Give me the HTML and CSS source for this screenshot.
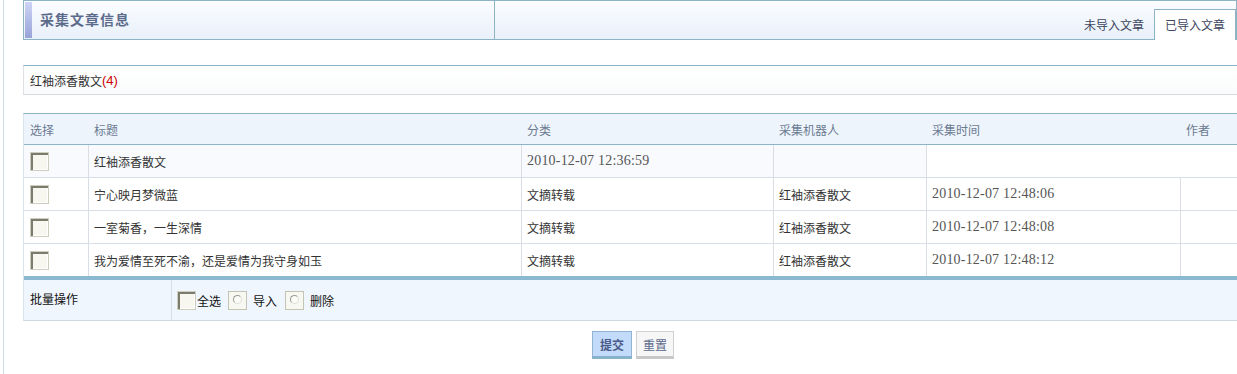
FILE: index.html
```html
<!DOCTYPE html>
<html lang="zh">
<head>
<meta charset="utf-8">
<title>采集文章信息</title>
<link rel="stylesheet" href="styles.css">
</head>
<body>
<div class="page">
  <div class="main">
    <div class="header">
      <div class="title"><span class="accent"></span><span class="title-text">采集文章信息</span></div>
      <div class="tabs">
        <span class="tab">未导入文章</span>
        <span class="tab active">已导入文章</span>
      </div>
    </div>

    <div class="info">红袖添香散文<span class="count">(4)</span></div>

    <div class="grid">
      <div class="row head">
        <div class="c">选择</div>
        <div class="c">标题</div>
        <div class="c">分类</div>
        <div class="c">采集机器人</div>
        <div class="c">采集时间</div>
        <div class="c">作者</div>
      </div>
      <div class="row body first">
        <div class="c"><span class="cb"></span></div>
        <div class="c d">红袖添香散文</div>
        <div class="c d"><span class="date">2010-12-07 12:36:59</span></div>
        <div class="c d"></div>
        <div class="c d span2"></div>
      </div>
      <div class="row body">
        <div class="c"><span class="cb"></span></div>
        <div class="c d">宁心映月梦微蓝</div>
        <div class="c d">文摘转载</div>
        <div class="c d">红袖添香散文</div>
        <div class="c d"><span class="date">2010-12-07 12:48:06</span></div>
        <div class="c d"></div>
      </div>
      <div class="row body">
        <div class="c"><span class="cb"></span></div>
        <div class="c d">一室菊香，一生深情</div>
        <div class="c d">文摘转载</div>
        <div class="c d">红袖添香散文</div>
        <div class="c d"><span class="date">2010-12-07 12:48:08</span></div>
        <div class="c d"></div>
      </div>
      <div class="row body last">
        <div class="c"><span class="cb"></span></div>
        <div class="c d">我为爱情至死不渝，还是爱情为我守身如玉</div>
        <div class="c d">文摘转载</div>
        <div class="c d">红袖添香散文</div>
        <div class="c d"><span class="date">2010-12-07 12:48:12</span></div>
        <div class="c d"></div>
      </div>
    </div>

    <div class="batch">
      <div class="batch-label">批量操作</div>
      <div class="batch-ops">
        <span class="cb"></span><span class="op-text tight">全选</span>
        <span class="rb"><span class="dot"></span></span><span class="op-text">导入</span>
        <span class="rb"><span class="dot"></span></span><span class="op-text">删除</span>
      </div>
    </div>

    <div class="buttons">
      <span class="btn primary">提交</span>
      <span class="btn">重置</span>
    </div>
  </div>
</div>
</body>
</html>
```

FILE: styles.css
```css
html, body {
  margin: 0;
  padding: 0;
  overflow: hidden;
  background: #fff;
}
body {
  font-family: "Noto Sans CJK SC", "Liberation Sans", sans-serif;
  font-size: 12px;
  color: #333;
}
.page {
  margin-left: 3px;
  border-left: 1px solid #c9dcec;
  padding-left: 19px;
  min-height: 374px;
}
.main {
  width: 1214px;
}

/* header */
.header {
  display: flex;
  height: 40px;
  box-sizing: border-box;
  border: 1px solid #8db3c6;
  background: linear-gradient(#fbfdff, #e8f0fa);
}
.title {
  width: 470px;
  border-right: 1px solid #8db3c6;
  display: flex;
  align-items: stretch;
  padding: 1px 0;
}
.accent {
  width: 7px;
  margin-left: 1px;
  background: linear-gradient(#cdd4f6, #98a3d8);
}
.title-text {
  margin-left: 8px;
  align-self: center;
  font-size: 14px;
  font-weight: bold;
  color: #5b6b8c;
  letter-spacing: 1px;
  margin-top: -2px;
}
.tabs {
  flex: 1;
  display: flex;
  justify-content: flex-end;
  align-items: flex-end;
}
.tab {
  display: flex;
  align-items: center;
  justify-content: center;
  height: 30px;
  padding: 0 10px;
  color: #3d4660;
  box-sizing: border-box;
  margin-bottom: -1px;
  padding-bottom: 2px;
}
.tab.active {
  height: 31px;
  width: 82px;
  padding: 0 0 2px;
  background: #fff;
  border: 1px solid #8db3c6;
  border-bottom: none;
}

/* info */
.info {
  margin-top: 25px;
  height: 30px;
  box-sizing: border-box;
  border-top: 1px solid #8db3c6;
  border-bottom: 1px solid #d6dadf;
  border-left: 1px solid #dde1e5;
  background: linear-gradient(#ffffff, #fafbfc);
  padding-left: 6px;
  display: flex;
  align-items: center;
  color: #333;
}
.count {
  color: #cc0000;
  font-family: "Liberation Sans", sans-serif;
  font-size: 13px;
}

/* table */
.grid {
  margin-top: 18px;
  border-top: 1px solid #8db3c6;
  border-left: 1px solid #dde3ea;
}
.row {
  display: grid;
  grid-template-columns: 64px 433px 252px 153px 254px 1fr;
}
.row.head {
  height: 30px;
  background: #eef4fb;
  border-bottom: 1px solid #8db3c6;
  color: #6b7b92;
}
.row .c {
  display: flex;
  align-items: center;
  padding-left: 5px;
  min-width: 0;
  white-space: nowrap;
}
.row.head .c { padding-left: 6px; }
.row.body {
  height: 33px;
  box-sizing: border-box;
  border-bottom: 1px solid #d9dfe8;
  background: #fff;
  color: #333;
}
.row.body.first { background: #f8fafd; }
.row.body.first .span2 { grid-column: span 2; background: #fff; }
.row.body.last {
  height: 36px;
  border-bottom: 4px solid #8ab8d0;
}
.row.body .c:first-child { padding-left: 6px; }
.row.body .c.d {
  border-left: 1px solid #d9dde4;
}
.date {
  font-family: "Liberation Serif", "DejaVu Serif", serif;
  font-size: 14px;
  color: #555;
  letter-spacing: 0.2px;
}

/* checkbox / radio imitations */
.cb {
  display: inline-block;
  width: 19px;
  height: 19px;
  box-sizing: border-box;
  border: 1px solid #cfcdbd;
  background: #f7f6ef;
  box-shadow: inset 2px 2px 0 #7c7c6e, inset -1px -1px 0 #ffffff;
  flex: none;
}
.rb {
  display: inline-flex;
  width: 19px;
  height: 19px;
  box-sizing: border-box;
  border: 1px solid #c5c3b3;
  background: #f8f8f2;
  padding: 3px 0 0 4px;
  flex: none;
}
.dot {
  width: 9px;
  height: 9px;
  box-sizing: border-box;
  border-radius: 50%;
  border: 1px solid;
  border-color: #9a9a90 #e0e0d8 #e0e0d8 #9a9a90;
  background: #fbfbf7;
}

/* batch row */
.batch {
  display: flex;
  height: 41px;
  box-sizing: border-box;
  background: #f0f6fd;
  border-bottom: 1px solid #d0d8e0;
  border-left: 1px solid #dde3ea;
}
.batch-label {
  width: 141px;
  padding-left: 6px;
  display: flex;
  align-items: center;
  color: #111;
  border-right: 1px solid #d9dfe8;
  padding-bottom: 4px;
}
.batch-ops {
  display: flex;
  align-items: center;
  padding-left: 5px;
  padding-top: 1px;
  color: #111;
}
.op-text {
  margin: 0 8px 0 6px;
}
.op-text.tight {
  margin: 0 7px 0 1px;
}

/* buttons */
.buttons {
  display: flex;
  justify-content: center;
  gap: 4px;
  margin-top: 10px;
  padding-left: 6px;
}
.btn {
  display: flex;
  align-items: center;
  justify-content: center;
  width: 38px;
  height: 28px;
  box-sizing: border-box;
  border: 1px solid #d0d0d0;
  border-bottom: 3px solid #c8c8c8;
  background: #f6f6f6;
  color: #5a6a8c;
}
.btn.primary {
  width: 40px;
  border-color: #8fb3d0;
  border-bottom-color: #86b2ca;
  background: #c3dbfa;
  font-weight: bold;
  color: #4a5a8a;
}
```
